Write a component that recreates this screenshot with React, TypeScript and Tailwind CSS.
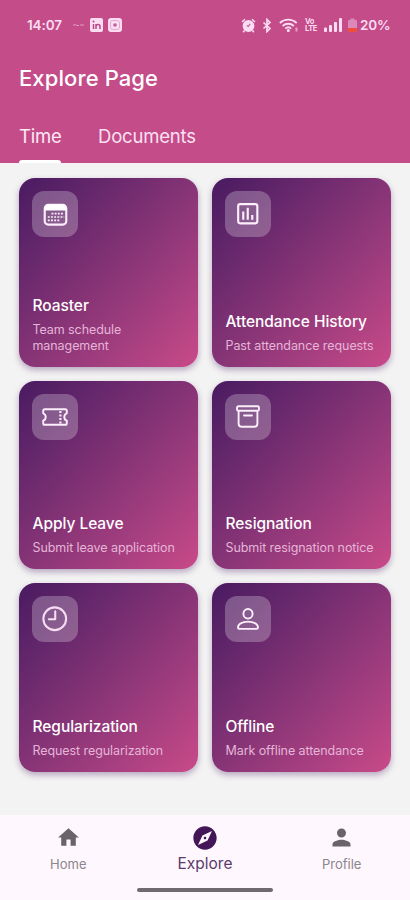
import type { ReactNode } from "react"
import { MdExplore, MdHome, MdPerson } from "react-icons/md"

const CalendarIcon = () => (
  <svg width="25" height="25" viewBox="0 0 26 26" fill="none">
    <rect x="1.8" y="3" width="22.4" height="20.5" rx="3.6" stroke="#fdeefb" strokeWidth="2.2" />
    <path d="M1.5 8.8V6.5A4 4 0 0 1 5.5 2.5h15a4 4 0 0 1 4 4v2.3z" fill="white" />
    <path d="M8.8 12H22M5 15.6h17M5 19.2h12.6" stroke="#fdeefb" strokeWidth="1.8" strokeDasharray="2 1.3" />
  </svg>
)

const ChartIcon = () => (
  <svg width="21.5" height="21.5" viewBox="0 0 22 22" fill="none" stroke="#fdeefb">
    <rect x="1.2" y="1.2" width="19.6" height="19.6" rx="2" strokeWidth="2.2" />
    <path d="M6.4 8.6v8.6M11 4.8v12.4M15.6 12.3v4.9" strokeWidth="2.2" />
  </svg>
)

const TicketIcon = () => (
  <svg width="26" height="18" viewBox="0 0 26 18" fill="none" stroke="#fdeefb" strokeWidth="1.9" strokeLinejoin="round">
    <path d="M1.2 2.8c0-1 .6-1.6 1.6-1.6h20.4c1 0 1.6.6 1.6 1.6v2.5c-1.5.5-2.5 1.9-2.5 3.7s1 3.2 2.5 3.7v2.5c0 1-.6 1.6-1.6 1.6H2.8c-1 0-1.6-.6-1.6-1.6v-2.5c1.5-.5 2.5-1.9 2.500-3.7S2.7 5.800 1.2 5.300z" />
    <path d="M18.4 3v12.5" strokeWidth="2.2" strokeDasharray="2 1.5" />
  </svg>
)

const ArchiveIcon = () => (
  <svg width="24" height="23" viewBox="0 0 24 23" fill="none" stroke="#fdeefb" strokeWidth="1.9" strokeLinecap="round" strokeLinejoin="round">
    <rect x="1" y="1.2" width="22" height="4.6" rx="1.5" />
    <path d="M2.6 6v12.4c0 2 1.2 3.3 3.2 3.3h12.4c2 0 3.2-1.3 3.2-3.3V6M8 10.5h8" />
  </svg>
)

const ClockIcon = () => (
  <svg width="25.5" height="25.5" viewBox="0 0 26 26" fill="none" stroke="#f6ddf2" strokeWidth="2.1" strokeLinecap="round" strokeLinejoin="round">
    <circle cx="13" cy="13" r="11.6" />
    <path d="M13.5 5.5V13.5H7" />
  </svg>
)

const PersonIcon = () => (
  <svg width="22" height="22" viewBox="0 0 22 22" fill="none" stroke="#fdeefb" strokeWidth="1.9">
    <ellipse cx="11" cy="5.8" rx="4.6" ry="4.8" />
    <path d="M1 19.5c0-3.4 4.2-5.9 10-5.9s10 2.5 10 5.9c0 .9-.6 1.4-1.6 1.4H2.6c-1 0-1.6-.5-1.6-1.4z" />
  </svg>
)

const cards: { title: string; text: string; icon: ReactNode }[] = [
  { title: "Roaster", text: "Team schedule management", icon: <CalendarIcon /> },
  { title: "Attendance History", text: "Past attendance requests", icon: <ChartIcon /> },
  { title: "Apply Leave", text: "Submit leave application", icon: <TicketIcon /> },
  { title: "Resignation", text: "Submit resignation notice", icon: <ArchiveIcon /> },
  { title: "Regularization", text: "Request regularization", icon: <ClockIcon /> },
  { title: "Offline", text: "Mark offline attendance", icon: <PersonIcon /> },
]

const StatusBar = () => {
  return (
    <div className="flex h-[50px] items-center justify-between pl-[27px] pr-[20px] text-[#fbdcf2]">
      <div className="flex items-center">
        <span className="w-[35px] text-[13.5px] font-semibold tracking-[-0.1px]">14:07</span>
        <svg className="ml-[11px]" width="11" height="4" viewBox="0 0 11 4" fill="none" stroke="currentColor" opacity=".55">
          <path d="M0 2.5l2-1 2 1h2M7 2h4" />
        </svg>
        <svg className="ml-[6px]" width="13" height="14" viewBox="0 0 13 14">
          <rect width="13" height="14" rx="2" fill="currentColor" />
          <path d="M3.5 6v5M6 11V6m0 2.5c0-2.6 4-2.6 4 0V11" stroke="#b64b89" strokeWidth="1.5" fill="none" />
          <circle cx="3.5" cy="3.5" r="1" fill="#b64b89" />
        </svg>
        <svg className="ml-[5px]" width="14" height="14" viewBox="0 0 14 14" fill="none">
          <rect width="14" height="14" rx="3" fill="currentColor" />
          <rect x="2.5" y="2.5" width="9" height="9" rx="2.5" stroke="#e6a9cf" />
          <circle cx="7" cy="7" r="1.8" fill="#c45f9c" />
        </svg>
      </div>
      <div className="flex items-center">
        <svg width="15" height="15" viewBox="0 0 15 15" fill="none">
          <path d="M1 4l3-2.8M14 4l-3-2.8M3.5 12.5l-1.3 1.8M11.5 12.5l1.3 1.8" stroke="currentColor" strokeWidth="1.5" />
          <circle cx="7.5" cy="8" r="5.9" fill="currentColor" />
          <path d="M9.2 5.8L7.3 8.5l-1.5-1" stroke="#c45f9c" strokeWidth="1.2" />
        </svg>
        <svg className="ml-[6px]" width="10" height="15" viewBox="0 0 10 15" fill="none" stroke="currentColor" strokeWidth="1.7">
          <path d="M1.5 4.5l6.5 6L5 13.5v-12l3 3-6.5 6" />
        </svg>
        <svg className="ml-[7px]" width="20" height="15" viewBox="0 0 20 15" fill="none" stroke="currentColor" strokeWidth="1.8">
          <path d="M.8 5C5.5.6 13 .6 17.7 5M3.6 8c3.2-3 8.1-3 11.3 0M6.3 10.7c1.7-1.6 4.2-1.6 5.9 0" />
          <circle cx="9.3" cy="12.5" r=".7" fill="currentColor" />
          <path d="M17.5 9.5v4" strokeWidth="2" opacity=".6" />
        </svg>
        <div className="ml-[6px] w-[14px] whitespace-pre text-[7.5px] font-bold leading-[7.5px] tracking-[-0.4px]">
          {"Vo\nLTE"}
        </div>
        <svg className="ml-[5px]" width="18" height="14" viewBox="0 0 18 14" fill="currentColor">
          <rect y="9.5" width="3" height="4.5" rx="1" />
          <rect x="5" y="7" width="3" height="7" rx="1" />
          <rect x="10" y="4" width="3" height="10" rx="1" />
          <rect x="15" width="3" height="14" rx="1" />
        </svg>
        <svg className="ml-[6px]" width="9" height="14" viewBox="0 0 9 14">
          <path d="M0 3q0-1 1-1h1.5V.5h4V2H8q1 0 1 1v7H0z" fill="#dd87ba" />
          <rect y="10" width="9" height="4" rx="1" fill="#ef4e3c" />
        </svg>
        <span className="ml-[3px] w-[30px] whitespace-nowrap text-[13.5px] font-semibold tracking-[-0.1px]">20%</span>
      </div>
    </div>
  )
}

const App = () => {
  return (
    <div className="flex h-[900px] w-[410px] flex-col overflow-hidden bg-[#f3f3f3] font-['Inter',sans-serif]">
      <header className="h-[163px] shrink-0 bg-[#c34c89]">
        <StatusBar />
        <h1 className="pl-[19px] pt-[11px] text-[22px] font-medium leading-[34px] tracking-[0.1px] text-white">Explore Page</h1>
        <div className="mt-[17px] flex gap-[37px] pl-[19px] text-[18.5px] tracking-[-0.2px] text-[#fde0f2]">
          <div className="flex h-[51px] w-[42px] flex-col justify-between">
            <span className="pt-[10px] leading-[28px] text-[#ffe8f6]">Time</span>
            <span className="h-[3px] rounded-t-[3px] bg-white"></span>
          </div>
          <span className="pt-[10px] leading-[28px]">Documents</span>
        </div>
      </header>
      <main className="grid grow auto-rows-[188.5px] grid-cols-2 content-start gap-[14px] px-[19px] pt-[15px]">
        {cards.map((card) => (
          <div
            key={card.title}
            className="flex flex-col justify-between rounded-[16px] bg-linear-to-br from-[#491a61] to-[#c94a89] p-[13px] shadow-[0_3px_6px_rgba(73,26,97,0.35)]"
          >
            <div className="flex size-[46px] items-center justify-center rounded-[12px] bg-white/25">{card.icon}</div>
            <div>
              <h2 className="whitespace-nowrap pl-[0.5px] text-[15.5px] font-medium leading-[22px] tracking-[-0.05px] text-white">{card.title}</h2>
              <p className="mt-[5px] pl-[0.5px] text-[12.5px] leading-[16px] tracking-[-0.08px] text-[#e5b5d8]">{card.text}</p>
            </div>
          </div>
        ))}
      </main>
      <nav className="h-[85px] shrink-0 bg-[#fef7fd]">
        <div className="grid h-[73px] grid-cols-3 text-center text-[#69636a]">
          <div className="flex flex-col items-center pt-[10px]">
            <MdHome size={25} />
            <span className="mt-[5px] text-[13px] leading-[18px] text-[#8b858c]">Home</span>
          </div>
          <div className="flex flex-col items-center pt-[9px] text-[#431658]">
            <MdExplore size={28} />
            <span className="mt-[2px] text-[15.5px] leading-[20px] text-[#5b3a6c]">Explore</span>
          </div>
          <div className="flex flex-col items-center pt-[9px]">
            <MdPerson size={27} />
            <span className="mt-[4px] text-[13px] leading-[18px] text-[#8b858c]">Profile</span>
          </div>
        </div>
        <div className="mx-auto h-[4px] w-[136px] rounded-full bg-[#706a70]"></div>
      </nav>
    </div>
  )
}

export default App
